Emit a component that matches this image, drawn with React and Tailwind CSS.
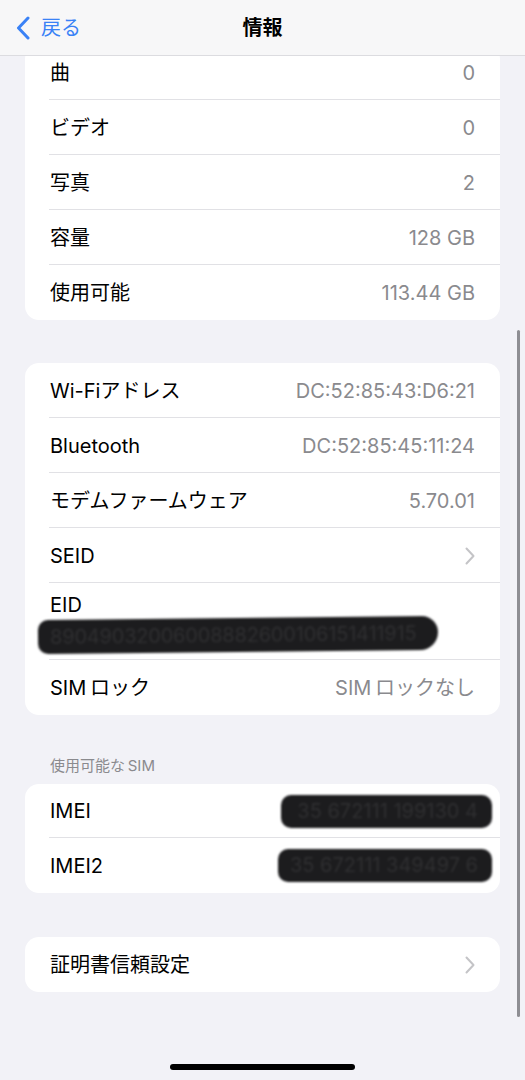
import React from 'react';

const font = { fontFamily: 'Inter, "Noto Sans CJK JP", sans-serif' };

function Chevron() {
  return (
    <svg width="10" height="18" viewBox="0 0 10 18" fill="none">
      <path d="M1.5 1.5 L8.5 9 L1.5 16.5" stroke="#c4c4c7" strokeWidth="2" strokeLinecap="round" strokeLinejoin="round" />
    </svg>
  );
}

function Row({ label, value, last, chevron, h = 'h-[55px]' }) {
  return (
    <div className={`relative flex items-center justify-between pl-[25px] pr-[25px] ${h}`}>
      <span className="text-[20px] text-black">{label}</span>
      {value && <span className="text-[20px] text-[#8a8a8e]">{value}</span>}
      {chevron && <Chevron />}
      {!last && <div className="absolute bottom-0 left-[24px] right-0 h-px bg-[#e1e1e5]" />}
    </div>
  );
}

function Redacted({ children, className }) {
  return (
    <span className={`inline-block bg-[#1c1c1e] blur-[1px] rounded-[10px] text-[#2f2f31] whitespace-nowrap ${className}`}>
      {children}
    </span>
  );
}

export default function App() {
  return (
    <div className="relative w-[525px] h-[1080px] overflow-hidden bg-[#f2f2f7]" style={font}>
      <div className="relative z-10 h-[56px] bg-[#f7f7f8] border-b border-[#dcdce0] flex items-center">
        <div className="flex items-center pl-[16px] gap-[11px] w-[120px]">
          <svg width="14" height="24" viewBox="0 0 14 24" fill="none">
            <path d="M12 2 L2.5 12 L12 22" stroke="#3a82f6" strokeWidth="3" strokeLinecap="round" strokeLinejoin="round" />
          </svg>
          <span className="text-[20px] text-[#3a82f6]">戻る</span>
        </div>
        <div className="flex-1 text-center text-[20px] font-bold text-black">情報</div>
        <div className="w-[120px]" />
      </div>

      <div className="px-[25px] -mt-[11px]">
        <div className="bg-white rounded-[14px]">
          <Row label="曲" value="0" />
          <Row label="ビデオ" value="0" />
          <Row label="写真" value="2" />
          <Row label="容量" value="128 GB" />
          <Row label="使用可能" value="113.44 GB" last />
        </div>

        <div className="bg-white rounded-[14px] mt-[43px]">
          <Row label="Wi-Fiアドレス" value="DC:52:85:43:D6:21" />
          <Row label="Bluetooth" value="DC:52:85:45:11:24" />
          <Row label="モデムファームウェア" value="5.70.01" />
          <Row label="SEID" chevron />
          <div className="relative h-[77px] pl-[25px] pt-[10px]">
            <div className="text-[20px] leading-[24px] text-black">EID</div>
            <Redacted className="-ml-[12px] mt-[1px] pl-[12px] pr-[22px] py-[4px] text-[20px] leading-[26px] tracking-[-0.2px] -rotate-[0.6deg] rounded-tr-[16px] rounded-br-[18px]">
              89049032006008882600106151411915
            </Redacted>
            <div className="absolute bottom-0 left-[24px] right-0 h-px bg-[#e1e1e5]" />
          </div>
          <Row label={'SIM\u2009ロック'} value={'SIM\u2009ロックなし'} last />
        </div>

        <div className="mt-[40px] pl-[25px] text-[15px] leading-[22px] text-[#8a8a8e]">{'使用可能な\u2009SIM'}</div>

        <div className="bg-white rounded-[14px] mt-[7px]">
          <div className="relative flex items-center justify-between pl-[25px] pr-[8px] h-[54px]">
            <span className="text-[20px] text-black">IMEI</span>
            <Redacted className="pl-[16px] pr-[14px] py-[4px] text-[20px] leading-[25px]">35 672111 199130 4</Redacted>
            <div className="absolute bottom-0 left-[24px] right-0 h-px bg-[#e1e1e5]" />
          </div>
          <div className="flex items-center justify-between pl-[25px] pr-[8px] h-[55px]">
            <span className="text-[20px] text-black">IMEI2</span>
            <Redacted className="pl-[12px] pr-[14px] py-[4px] text-[20px] leading-[25px]">35 672111 349497 6</Redacted>
          </div>
        </div>

        <div className="bg-white rounded-[14px] mt-[44px]">
          <Row label="証明書信頼設定" chevron last />
        </div>
      </div>

      <div className="absolute right-[5px] top-[330px] w-[3px] h-[687px] rounded-full bg-[#8e8e93]" />
      <div className="absolute left-[170px] bottom-[10px] w-[185px] h-[6px] rounded-full bg-black" />
    </div>
  );
}
